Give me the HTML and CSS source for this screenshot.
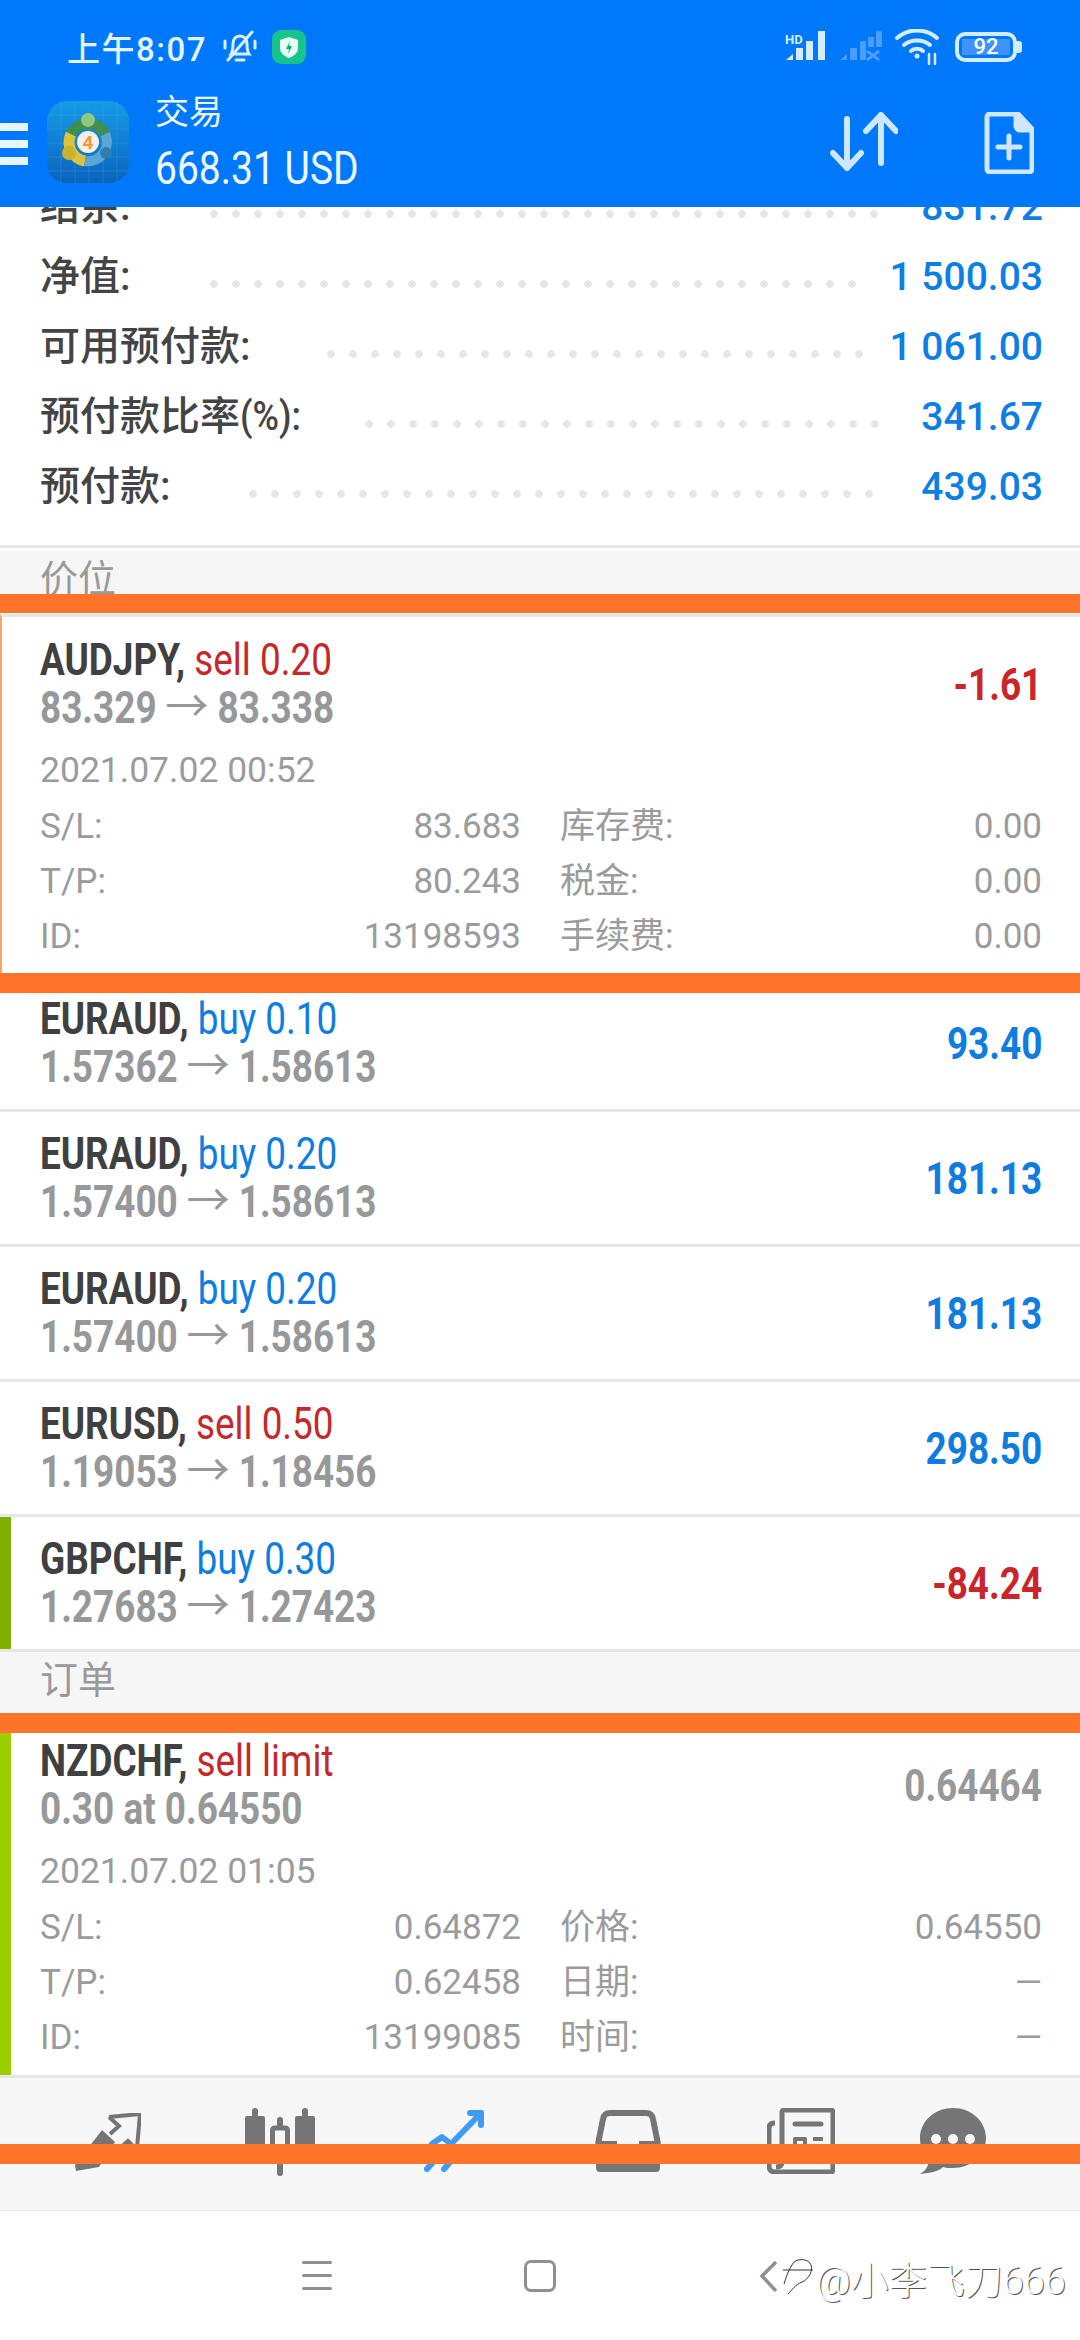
FILE: index.html
```html
<!DOCTYPE html>
<html>
<head>
    <meta charset='utf-8'>
    <title>交易</title>
    <meta name='viewport' content='width=device-width, initial-scale=1'>
    <link rel="stylesheet" href="styles.css">
</head>
<body>
    <div class="header">
        <div class="status">
            <span class="clock">上午8:07</span>
            <svg class="bell" width="36" height="34" viewBox="0 0 36 34" fill="none" stroke="#d9efff" stroke-width="3" stroke-linecap="round">
                <path d="M9 24c2-3 2-6 2-10 0-5 3-8 7-8s7 3 7 8c0 4 0 7 2 10z"/>
                <path d="M14 30h8"/><path d="M3 11v7M33 11v7"/>
                <path d="M6 30L30 2"/>
            </svg>
            <svg class="shield" width="34" height="34" viewBox="0 0 34 34">
                <rect width="34" height="34" rx="9" fill="#17c48c"/>
                <path d="M17 7l9 3v8c0 5-4 8-9 10-5-2-9-5-9-10v-8z" fill="#e8fff6"/>
                <path d="M18 11l-4 8h3l-1 5 4-8h-3z" fill="#17a877"/>
            </svg>
            <div class="status-right">
                <svg width="42" height="32" viewBox="0 0 42 32" fill="#d4ecff">
                    <text x="0" y="13" font-size="13" font-weight="700" font-family="Roboto, sans-serif">HD</text>
                    <polygon points="1,29 8,23 8,29"/><rect x="11" y="17" width="7" height="12"/><rect x="21" y="10" width="7" height="19"/><rect x="33" y="0" width="7" height="29"/>
                </svg>
                <svg width="42" height="32" viewBox="0 0 42 32" fill="#4a9dfb">
                    <polygon points="0,29 7,23 7,29"/><rect x="10" y="17" width="7" height="12"/><rect x="20" y="10" width="6" height="19"/><rect x="28" y="6" width="6" height="10"/><rect x="36" y="0" width="6" height="16"/>
                    <path d="M27 20l12 9M39 20l-12 9" stroke="#4a9dfb" stroke-width="3"/>
                </svg>
                <svg width="44" height="36" viewBox="0 0 44 36" fill="none" stroke="#d4ecff" stroke-width="4" stroke-linecap="round">
                    <path d="M2 9c11-10 29-10 40 0"/><path d="M9 16c7-6 19-6 26 0"/><path d="M16 22c3-3 9-3 12 0"/>
                    <circle cx="22" cy="27" r="2.500" fill="#d4ecff" stroke="none"/>
                    <path d="M34 25v10M40 25v10" stroke-width="2.500"/>
                </svg>
                <div class="battery"><span class="battery-fill">92</span></div>
                <span class="battery-tip"></span>
            </div>
        </div>
        <div class="appbar">
            <div class="burger"><span></span><span></span><span></span></div>
            <svg class="logo" width="82" height="82" viewBox="0 0 82 82" fill="none">
                <defs>
                    <linearGradient id="lg" x1="0" y1="0" x2="0" y2="1">
                        <stop offset="0" stop-color="#169be6"/><stop offset="1" stop-color="#0b63bd"/>
                    </linearGradient>
                </defs>
                <rect width="82" height="82" rx="20" fill="url(#lg)"/>
                <path d="M14 0v82M28 0v82M42 0v82M56 0v82M70 0v82M0 14h82M0 28h82M0 42h82M0 56h82M0 70h82" stroke="#3aa6ea" stroke-width="1" opacity=".35"/>
                <path d="M24 33A19 19 0 0 0 38 60" stroke="#d8c440" stroke-width="11"/>
                <path d="M58 33A19 19 0 0 1 38 60" stroke="#5aa6d6" stroke-width="10"/>
                <path d="M24 33A19 19 0 0 1 58 33" stroke="#3f8f4f" stroke-width="11"/>
                <circle cx="41" cy="19" r="7" fill="#8fc97f"/>
                <circle cx="22" cy="52" r="7" fill="#c9b22e"/>
                <circle cx="59" cy="52" r="6" fill="#2f7fae"/>
                <circle cx="41" cy="41" r="11" fill="#f4f0e8"/>
                <text x="41" y="48" text-anchor="middle" font-size="19" font-weight="700" fill="#ef9a3a" font-family="Roboto, sans-serif">4</text>
            </svg>
            <div class="appbar-text">
                <div class="appbar-title">交易</div>
                <div class="appbar-amount">668.31 USD</div>
            </div>
            <svg class="sort-icon" width="68" height="60" viewBox="0 0 68 60" fill="none" stroke="#cfe6ff" stroke-width="6" stroke-linecap="round" stroke-linejoin="round">
                <path d="M17 7v49M3 41l14 15 14-15"/>
                <path d="M51 3v48M36 19L51 3l15 16"/>
            </svg>
            <svg class="doc-icon" width="50" height="62" viewBox="0 0 50 62" fill="none" stroke="#cfe6ff" stroke-width="5" stroke-linejoin="round">
                <path d="M3 5a3 3 0 0 1 3-3h28l14 15v40a3 3 0 0 1-3 3H6a3 3 0 0 1-3-3z"/>
                <path d="M32 3l15 15H36a4 4 0 0 1-4-4z" fill="#cfe6ff"/>
                <path d="M25 24v22M14 35h22" stroke-linecap="round"/>
            </svg>
        </div>
    </div>

    <div class="summary">
        <div class="sum-row"><span class="sum-label">结余:</span><span class="dots dots-31"></span><span class="sum-value">831.72</span></div>
        <div class="sum-row"><span class="sum-label">净值:</span><span class="dots dots-30"></span><span class="sum-value">1 500.03</span></div>
        <div class="sum-row"><span class="sum-label">可用预付款:</span><span class="dots dots-25"></span><span class="sum-value">1 061.00</span></div>
        <div class="sum-row"><span class="sum-label">预付款比率<span class="sum-latin">(%):</span></span><span class="dots dots-24"></span><span class="sum-value">341.67</span></div>
        <div class="sum-row"><span class="sum-label">预付款:</span><span class="dots dots-29"></span><span class="sum-value">439.03</span></div>
    </div>

    <div class="section">价位</div>

    <div class="row row-open row-selected">
        <div class="row-head">
            <div class="cond">
                <div class="line"><b class="sym">AUDJPY,</b> <span class="sell">sell 0.20</span></div>
                <div class="line price">83.329 <span class="arrow">→</span> 83.338</div>
            </div>
            <div class="cond-r loss">-1.61</div>
        </div>
        <div class="date">2021.07.02 00:52</div>
        <div class="details">
            <span>S/L:</span><span class="val">83.683</span><span class="lab2">库存费:</span><span class="val">0.00</span>
            <span>T/P:</span><span class="val">80.243</span><span class="lab2">税金:</span><span class="val">0.00</span>
            <span>ID:</span><span class="val">13198593</span><span class="lab2">手续费:</span><span class="val">0.00</span>
        </div>
    </div>

    <div class="row">
        <div class="row-head">
            <div class="cond">
                <div class="line"><b class="sym">EURAUD,</b> <span class="buy">buy 0.10</span></div>
                <div class="line price">1.57362 <span class="arrow">→</span> 1.58613</div>
            </div>
            <div class="cond-r gain">93.40</div>
        </div>
    </div>
    <div class="row">
        <div class="row-head">
            <div class="cond">
                <div class="line"><b class="sym">EURAUD,</b> <span class="buy">buy 0.20</span></div>
                <div class="line price">1.57400 <span class="arrow">→</span> 1.58613</div>
            </div>
            <div class="cond-r gain">181.13</div>
        </div>
    </div>
    <div class="row">
        <div class="row-head">
            <div class="cond">
                <div class="line"><b class="sym">EURAUD,</b> <span class="buy">buy 0.20</span></div>
                <div class="line price">1.57400 <span class="arrow">→</span> 1.58613</div>
            </div>
            <div class="cond-r gain">181.13</div>
        </div>
    </div>
    <div class="row">
        <div class="row-head">
            <div class="cond">
                <div class="line"><b class="sym">EURUSD,</b> <span class="sell">sell 0.50</span></div>
                <div class="line price">1.19053 <span class="arrow">→</span> 1.18456</div>
            </div>
            <div class="cond-r gain">298.50</div>
        </div>
    </div>
    <div class="row row-olive">
        <div class="row-head">
            <div class="cond">
                <div class="line"><b class="sym">GBPCHF,</b> <span class="buy">buy 0.30</span></div>
                <div class="line price">1.27683 <span class="arrow">→</span> 1.27423</div>
            </div>
            <div class="cond-r loss">-84.24</div>
        </div>
    </div>

    <div class="section">订单</div>

    <div class="row row-open row-lime">
        <div class="row-head">
            <div class="cond">
                <div class="line"><b class="sym">NZDCHF,</b> <span class="sell">sell limit</span></div>
                <div class="line price">0.30 at 0.64550</div>
            </div>
            <div class="cond-r pending">0.64464</div>
        </div>
        <div class="date">2021.07.02 01:05</div>
        <div class="details">
            <span>S/L:</span><span class="val">0.64872</span><span class="lab2">价格:</span><span class="val">0.64550</span>
            <span>T/P:</span><span class="val">0.62458</span><span class="lab2">日期:</span><span class="val">—</span>
            <span>ID:</span><span class="val">13199085</span><span class="lab2">时间:</span><span class="val">—</span>
        </div>
    </div>

    <div class="toolbar">
        <svg class="tool-1" width="66" height="60" viewBox="0 0 66 60" fill="#757575">
            <path d="M1 58l-1-6 27-35 13 12-16 25z"/>
            <path d="M34 4l31-3-3 34M34 4l10 9-9 8M44 36l9-8 8 8" fill="none" stroke="#757575" stroke-width="4"/>
        </svg>
        <svg width="70" height="70" viewBox="0 0 70 70" fill="#757575">
            <rect x="0" y="8" width="20" height="40" rx="2"/><rect x="7" y="0" width="6" height="10" rx="3"/>
            <rect x="50" y="8" width="20" height="40" rx="2"/><rect x="57" y="0" width="6" height="10" rx="3"/>
            <rect x="27.500" y="20" width="15" height="30" rx="2" fill="none" stroke="#757575" stroke-width="5"/>
            <rect x="32" y="9" width="6" height="12" rx="3"/><rect x="32" y="48" width="6" height="20" rx="3"/>
        </svg>
        <svg class="tool-2" width="60" height="62" viewBox="0 0 60 62" fill="none" stroke="#3f9cf6" stroke-width="6" stroke-linecap="round" stroke-linejoin="round">
            <path d="M3 59l14-16M20 59l14-16"/>
            <path d="M8 34l10-7 9 7 30-31"/>
            <path d="M46 3h11v12"/>
        </svg>
        <svg class="tool-2" width="66" height="62" viewBox="0 0 66 62" fill="#757575">
            <path d="M3 34L8 9q1-6 7-6h36q6 0 7 6l5 25" fill="none" stroke="#757575" stroke-width="6"/>
            <path d="M1 31h21v8h22v-8h21v27q0 4-4 4H5q-4 0-4-4z"/>
        </svg>
        <svg width="68" height="66" viewBox="0 0 68 66" fill="none" stroke="#757575" stroke-width="5" stroke-linejoin="round">
            <path d="M15 4a2 2 0 0 1 2-2h47a2 2 0 0 1 2 2v58a2 2 0 0 1-2 2H8q-6 0-6-6V20q0-5 6-5"/>
            <path d="M15 4v50q0 5-6 5"/>
            <path d="M28 16h26" stroke-linecap="round"/>
            <path d="M28 31h10v16H28z" stroke-width="4"/>
            <path d="M46 31h10M46 39h10M28 54h28" stroke-width="4"/>
        </svg>
        <svg width="66" height="66" viewBox="0 0 66 66">
            <path d="M33 0c18 0 33 13 33 30S51 60 33 60c-4 0-7 0-10-1-4 4-12 6-23 7 5-3 8-7 9-13C3 47 0 39 0 30 0 13 15 0 33 0z" fill="#757575"/>
            <circle cx="16" cy="31" r="5" fill="#f7f7f7"/><circle cx="33" cy="31" r="5" fill="#f7f7f7"/><circle cx="50" cy="31" r="5" fill="#f7f7f7"/>
        </svg>
    </div>

    <div class="navbar">
        <div class="nav-menu"><span></span><span></span><span></span></div>
        <div class="nav-home"></div>
        <svg class="nav-back" width="20" height="32" viewBox="0 0 20 32" fill="none" stroke="#909090" stroke-width="3.500"><path d="M17 2L3 16l14 15"/></svg>
    </div>

    <!-- overlays on top of the screenshot -->
    <div class="stripe stripe-1"></div>
    <div class="stripe stripe-2"></div>
    <div class="stripe stripe-3"></div>
    <div class="stripe stripe-4"></div>
    <div class="watermark">
        <svg width="34" height="44" viewBox="0 0 34 44" fill="none" stroke="#333" stroke-width="1">
            <path d="M14 6c5-4 15-3 17 3s-2 14-9 17-10 8-14 12"/><path d="M14 6C8 14 6 22 4 28"/><path d="M3 14h30"/>
        </svg>
        <span>@小李飞刀666</span>
    </div>
</body>
</html>
```

FILE: styles.css
```css
* {
    box-sizing: border-box;
}
body {
    margin: 0;
    width: 1080px;
    height: 2340px;
    position: relative;
    overflow: hidden;
    background: #fff;
    font-family: Roboto, "Noto Sans CJK SC", sans-serif;
    color: #444;
}

/* header */
.header {
    position: relative;
    z-index: 1;
    height: 207px;
    background: #0078fa;
    color: #eef8ff;
}
.status {
    height: 83px;
    padding: 11px 0 0 67px;
    display: flex;
    align-items: center;
}
.clock {
    font-size: 33px;
    font-weight: 500;
    letter-spacing: 1.500px;
    color: #e3f3ff;
    width: 155px;
    white-space: nowrap;
}
.bell {
    margin-right: 14px;
}
.status-right {
    margin-left: auto;
    padding-right: 63px;
    display: flex;
    align-items: center;
    gap: 13px;
    position: relative;
}
.battery {
    width: 62px;
    height: 30px;
    border: 4px solid #d4ecff;
    border-radius: 10px;
    padding: 3px;
    margin-left: 3px;
}
.battery-fill {
    display: block;
    width: 48px;
    height: 16px;
    line-height: 16px;
    background: #3d92fb;
    color: #fff;
    font-size: 22px;
    font-weight: 500;
    text-align: center;
}
.battery-tip {
    position: absolute;
    right: 63px;
    width: 5px;
    height: 12px;
    margin-right: -5px;
    border-radius: 0 3px 3px 0;
    background: #d4ecff;
}
.appbar {
    height: 124px;
    display: flex;
    align-items: flex-start;
}
.burger {
    width: 28px;
    margin: 40px 19px 0 0;
    display: flex;
    flex-direction: column;
    gap: 9px;
}
.burger span {
    height: 8px;
    background: #e6f5ff;
}
.logo {
    margin-top: 18px;
}
.appbar-text {
    margin-left: 26px;
}
.appbar-title {
    font-size: 34px;
    line-height: 56px;
    margin-top: 1px;
}
.appbar-amount {
    font-size: 47px;
    line-height: 56px;
    transform: scaleX(.83);
    transform-origin: left center;
    white-space: nowrap;
}
.sort-icon {
    margin: 29px 0 0 auto;
}
.doc-icon {
    margin: 29px 46px 0 86px;
}

/* account summary */
.summary {
    margin-top: -35px;
    height: 376px;
    border-bottom: 3px solid #e6e6e6;
}
.sum-row {
    height: 70px;
    padding: 0 37px 0 40px;
    display: flex;
    align-items: center;
}
.sum-label {
    margin-top: -8px;
    font-size: 40px;
    font-weight: 500;
    color: #444;
    white-space: nowrap;
}
.sum-latin {
    display: inline-block;
    width: 71px;
    transform: scaleX(.9);
    transform-origin: left center;
}
.sum-value {
    margin-left: auto;
    font-size: 39px;
    font-weight: 500;
    color: #0e7fe2;
}
.dots {
    height: 8px;
    margin: 14px 0 0 76px;
    background: radial-gradient(circle at 4px 4px, #e6e6e6 3.500px, transparent 4px) 0 0 / 22px 8px repeat-x;
}
.dots-24 { width: 528px; margin-left: 54px; }
.dots-25 { width: 550px; }
.dots-29 { width: 638px; margin-left: 78px; }
.dots-30 { width: 660px; margin-left: 79px; }
.dots-31 { width: 682px; margin-left: 79px; }

/* section titles */
.section {
    margin-top: 3px;
    height: 63px;
    padding: 5px 40px 0;
    background: #f6f6f6;
    color: #999;
    font-size: 38px;
    line-height: 46px;
}
.section + .row-open {
    border-top: 3px solid #e6e6e6;
}
.row + .section {
    margin-top: 0;
}

/* positions */
.row {
    height: 135px;
    padding: 18px 38px 0 40px;
    border-bottom: 3px solid #e6e6e6;
}
.row-open {
    height: 363px;
    padding-top: 19px;
}
.row-selected {
    border-bottom: none;
    border-left: 2px solid #f9a56f;
    padding-left: 38px;
}
.row-olive {
    box-shadow: inset 11px 0 0 #80b000;
}
.row-lime {
    box-shadow: inset 11px 0 0 #9ccf00;
}
.row-head {
    height: 96px;
    display: flex;
    align-items: center;
    justify-content: space-between;
}
.cond {
    transform: scaleX(.82);
    transform-origin: left center;
    white-space: nowrap;
    font-size: 45px;
}
.line {
    line-height: 48px;
}
.sym {
    color: #404040;
}
.sell {
    color: #c4282a;
}
.buy {
    color: #0f7de0;
}
.price {
    color: #97989a;
    font-weight: 700;
}
.arrow {
    display: inline-block;
    font-weight: 400;
    font-size: 44px;
    line-height: 40px;
    vertical-align: 1px;
    margin: 0 4px;
    transform: scaleX(1.2);
}
.cond-r {
    transform: scaleX(.82);
    transform-origin: right center;
    font-size: 45px;
    font-weight: 700;
}
.loss {
    color: #c9252a;
}
.gain {
    color: #0f7de0;
}
.pending {
    color: #97989a;
}
.date {
    margin-top: 11px;
    font-size: 35.500px;
    line-height: 55px;
    color: #9a9b9d;
}
.details {
    margin-top: 1px;
    display: grid;
    grid-template-columns: 150px 331px 190px 331px;
    font-size: 35px;
    line-height: 55px;
    color: #9a9b9d;
    white-space: nowrap;
}
.lab2 {
    padding-left: 39px;
}
.val {
    text-align: right;
}

/* bottom tabs */
.toolbar {
    height: 133px;
    padding: 30px 0 0 22px;
    background: #f7f7f7;
    border-bottom: 1px solid #e6e6e6;
    display: grid;
    grid-template-columns: 172px 172px 176px 172px 174px 130px;
    justify-items: center;
    align-items: start;
}
.tool-1 {
    margin-top: 5px;
}
.tool-2 {
    margin-top: 2px;
}

/* android nav */
.navbar {
    height: 129px;
    padding-left: 302px;
    display: flex;
    align-items: center;
}
.nav-menu {
    width: 30px;
    display: flex;
    flex-direction: column;
    gap: 10px;
}
.nav-menu span {
    height: 3px;
    background: #909090;
    border-radius: 2px;
}
.nav-home {
    width: 32px;
    height: 32px;
    margin-left: 192px;
    border: 3px solid #909090;
    border-radius: 7px;
}
.nav-back {
    margin-left: 203px;
}

/* overlays */
.stripe {
    position: absolute;
    left: 0;
    width: 100%;
    z-index: 2;
    background: #ff7429;
}
.stripe-1 { top: 594px; height: 19px; }
.stripe-2 { top: 973px; height: 20px; }
.stripe-3 { top: 1713px; height: 20px; }
.stripe-4 { top: 2144px; height: 20px; }
.watermark {
    position: absolute;
    z-index: 2;
    left: 780px;
    top: 2250px;
    display: flex;
    align-items: center;
    gap: 2px;
    font-size: 38px;
    font-weight: 300;
    color: #fff;
    text-shadow: 1px 1px 0 #555;
    white-space: nowrap;
}
```
